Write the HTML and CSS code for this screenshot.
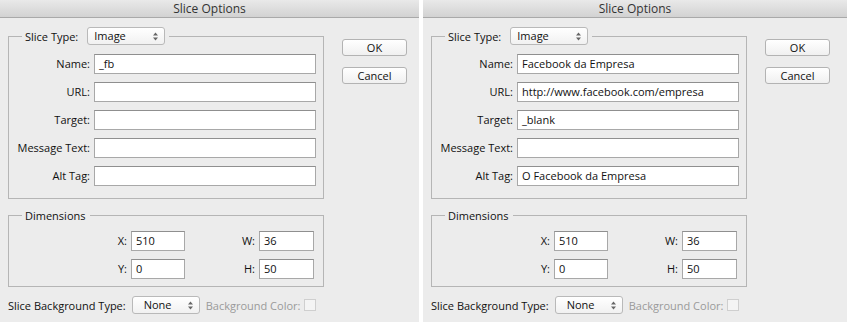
FILE: index.html
```html
<!DOCTYPE html>
<html lang="en">
<head>
    <meta charset="UTF-8">
    <title>Slice Options</title>
    <link rel="stylesheet" href="styles.css">
</head>
<body>
    <div class="screen">
        <div class="dialog">
            <div class="titlebar">Slice Options</div>
            <div class="dialog-body">
                <div class="main">
                    <fieldset class="group">
                        <legend>Slice Type: <span class="select select-type">Image<svg class="arrows" width="5" height="9" viewBox="0 0 5 9"><path d="M0 3.5 L2.5 0.5 L5 3.5 Z M0 5.5 L2.5 8.5 L5 5.5 Z" fill="#666"/></svg></span></legend>
                        <div class="fields">
                            <label>Name:</label><div class="input">_fb</div>
                            <label>URL:</label><div class="input"></div>
                            <label>Target:</label><div class="input"></div>
                            <label>Message Text:</label><div class="input"></div>
                            <label>Alt Tag:</label><div class="input"></div>
                        </div>
                    </fieldset>
                    <fieldset class="group dims">
                        <legend>Dimensions</legend>
                        <div class="dim-grid">
                            <label>X:</label><div class="input">510</div>
                            <label>W:</label><div class="input">36</div>
                            <label>Y:</label><div class="input">0</div>
                            <label>H:</label><div class="input">50</div>
                        </div>
                    </fieldset>
                    <div class="bg-row">
                        <span>Slice Background Type:</span>
                        <span class="select select-none">None<svg class="arrows" width="5" height="9" viewBox="0 0 5 9"><path d="M0 3.5 L2.5 0.5 L5 3.5 Z M0 5.5 L2.5 8.5 L5 5.5 Z" fill="#666"/></svg></span>
                        <span class="disabled">Background Color:</span>
                        <span class="swatch"></span>
                    </div>
                </div>
                <div class="buttons">
                    <div class="btn">OK</div>
                    <div class="btn">Cancel</div>
                </div>
            </div>
        </div>

        <div class="dialog dialog-wide">
            <div class="titlebar">Slice Options</div>
            <div class="dialog-body">
                <div class="main">
                    <fieldset class="group">
                        <legend>Slice Type: <span class="select select-type">Image<svg class="arrows" width="5" height="9" viewBox="0 0 5 9"><path d="M0 3.5 L2.5 0.5 L5 3.5 Z M0 5.5 L2.5 8.5 L5 5.5 Z" fill="#666"/></svg></span></legend>
                        <div class="fields">
                            <label>Name:</label><div class="input">Facebook da Empresa</div>
                            <label>URL:</label><div class="input">http://www.facebook.com/empresa</div>
                            <label>Target:</label><div class="input">_blank</div>
                            <label>Message Text:</label><div class="input"></div>
                            <label>Alt Tag:</label><div class="input">O Facebook da Empresa</div>
                        </div>
                    </fieldset>
                    <fieldset class="group dims">
                        <legend>Dimensions</legend>
                        <div class="dim-grid">
                            <label>X:</label><div class="input">510</div>
                            <label>W:</label><div class="input">36</div>
                            <label>Y:</label><div class="input">0</div>
                            <label>H:</label><div class="input">50</div>
                        </div>
                    </fieldset>
                    <div class="bg-row">
                        <span>Slice Background Type:</span>
                        <span class="select select-none">None<svg class="arrows" width="5" height="9" viewBox="0 0 5 9"><path d="M0 3.5 L2.5 0.5 L5 3.5 Z M0 5.5 L2.5 8.5 L5 5.5 Z" fill="#666"/></svg></span>
                        <span class="disabled">Background Color:</span>
                        <span class="swatch"></span>
                    </div>
                </div>
                <div class="buttons">
                    <div class="btn">OK</div>
                    <div class="btn">Cancel</div>
                </div>
            </div>
        </div>
    </div>
</body>
</html>
```

FILE: styles.css
```css
* {
    margin: 0;
    padding: 0;
    box-sizing: border-box;
}

body {
    background: #ffffff;
    font-family: 'Open Sans', 'DejaVu Sans', sans-serif;
    font-size: 11px;
    color: #111;
}

.screen {
    display: flex;
    gap: 4px;
    height: 322px;
}

.dialog {
    width: 419px;
    height: 322px;
    background: #ececec;
    display: flex;
    flex-direction: column;
}

.dialog-wide {
    width: 424px;
}

.titlebar {
    height: 18px;
    line-height: 17px;
    text-align: center;
    font-size: 12px;
    color: #333;
    background: linear-gradient(#e9e9e9, #d2d2d2);
    border-bottom: 1px solid #a9a9a9;
}

.dialog-body {
    display: flex;
    padding: 9px 0 0 8px;
}

.main {
    width: 316px;
}

.group {
    border: 1px solid #b5b5b5;
    padding: 0 7px 12px 0;
}

.group legend {
    margin-left: 13px;
    padding: 0 4px 0 3px;
    height: 18px;
    display: flex;
    align-items: center;
    gap: 9px;
}

.select {
    position: relative;
    display: inline-block;
    height: 18px;
    line-height: 16px;
    padding-left: 6px;
    background: linear-gradient(#ffffff, #f1f1f1);
    border: 1px solid #b9b9b9;
    border-radius: 3px;
    color: #111;
}

.select-type {
    width: 78px;
}

.select-none {
    width: 68px;
    padding-left: 11px;
}

.arrows {
    position: absolute;
    right: 6px;
    top: 4px;
}

.fields {
    display: grid;
    grid-template-columns: 81px 1fr;
    column-gap: 4px;
    row-gap: 8px;
    margin-top: 9px;
}

.fields label,
.dim-grid label {
    text-align: right;
    line-height: 20px;
}

.input {
    height: 20px;
    line-height: 18px;
    padding-left: 4px;
    background: #fff;
    border: 1px solid #a8a8a8;
    border-top-color: #8f8f8f;
    color: #111;
    white-space: nowrap;
}

.dims {
    margin-top: 9px;
    padding-bottom: 7px;
}

.dims legend {
    height: 14px;
}

.dim-grid {
    display: grid;
    grid-template-columns: 118px 54px 66px 55px;
    column-gap: 4px;
    row-gap: 8px;
    margin-top: 9px;
}

.bg-row {
    display: flex;
    align-items: center;
    margin-top: 9px;
    height: 18px;
}

.bg-row .select {
    margin-left: 6px;
}

.disabled {
    color: #9a9a9a;
    margin-left: 6px;
}

.swatch {
    width: 12px;
    height: 12px;
    margin-left: 4px;
    border: 1px solid #cfcfcf;
    background: #f4f4f4;
}

.buttons {
    display: flex;
    flex-direction: column;
    gap: 11px;
    margin-left: 18px;
    margin-top: 12px;
}

.btn {
    width: 65px;
    height: 17px;
    line-height: 15px;
    text-align: center;
    background: linear-gradient(#ffffff, #f0f0f0);
    border: 1px solid #b3b3b3;
    border-radius: 3px;
    color: #111;
}
```
